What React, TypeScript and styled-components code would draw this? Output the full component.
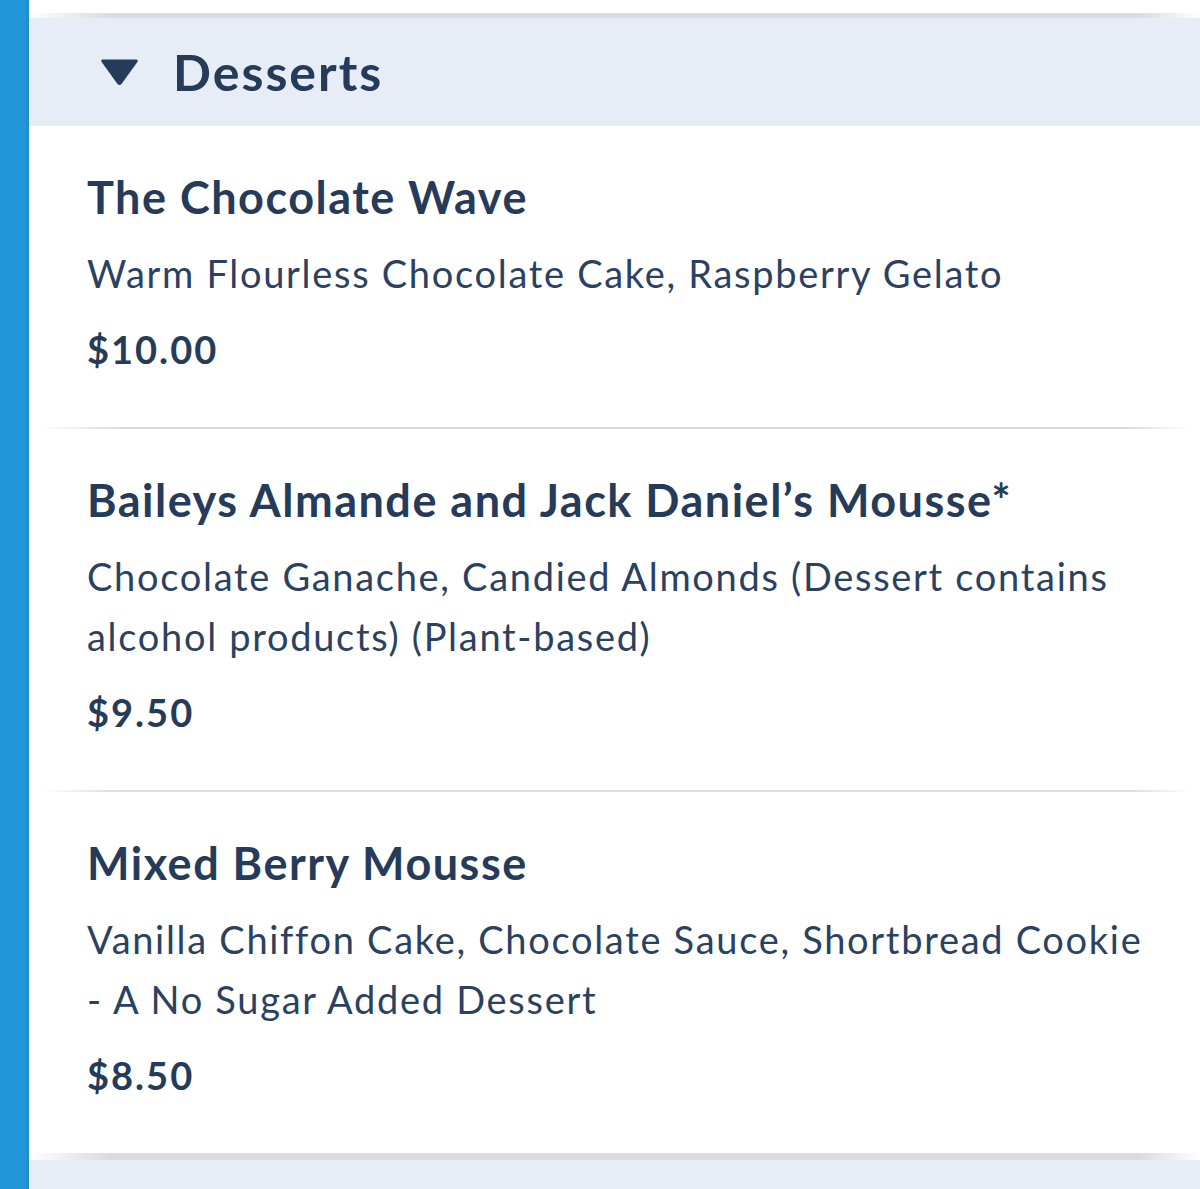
import React from "react";
import styled, { createGlobalStyle } from "styled-components";

const Global = createGlobalStyle`
  html, body { margin: 0; padding: 0; background: #ffffff; }
  body { font-family: Lato, "Noto Sans", sans-serif; color: #253b59; -webkit-font-smoothing: antialiased; }
`;

const Page = styled.div`
  display: flex;
  min-height: 1189px;
  overflow: hidden;
`;

const Sidebar = styled.div`
  width: 29px;
  flex: none;
  background: linear-gradient(to right, #2196d8 0, #2196d8 25px, #1e89c6 29px);
`;

const Main = styled.div`
  flex: 1;
  display: flex;
  flex-direction: column;
  padding-top: 13px;
`;

const Rule = styled.div<{ $thick?: number }>`
  height: ${(p) => p.$thick ?? 2}px;
  margin: 0 ${(p) => (p.$thick ? 0 : 10)}px 0 ${(p) => (p.$thick ? 0 : 11)}px;
  background: linear-gradient(
    to right,
    rgba(220, 220, 222, 0) 0,
    #dcdcde 80px,
    #dcdcde calc(100% - 60px),
    rgba(220, 220, 222, 0) 100%
  );
`;

const Header = styled.div`
  height: 108px;
  background: #e6edf7;
  display: flex;
  align-items: center;
  padding-left: 71px;
  gap: 34px;
`;

const Caret = styled.svg`
  width: 39px;
  height: 28px;
  flex: none;
`;

const HeaderTitle = styled.h2`
  margin: 0;
  font-size: 50px;
  font-weight: 700;
  letter-spacing: 2px;
  line-height: 60px;
  color: #253b59;
`;

const Item = styled.div`
  padding: 41px 40px 48px 58px;
  display: flex;
  flex-direction: column;
  gap: 16px;
`;

const Title = styled.div`
  font-size: 45px;
  font-weight: 700;
  line-height: 60px;
  letter-spacing: 1.5px;
`;

const Desc = styled.div`
  font-size: 38px;
  font-weight: 400;
  line-height: 60px;
  letter-spacing: 1.7px;
  color: #2b4160;
`;

const Price = styled.div`
  font-size: 38px;
  font-weight: 700;
  line-height: 60px;
  letter-spacing: 2px;
`;

const Footer = styled.div`
  flex: 1;
  background: #e6edf7;
`;

const items = [
  {
    title: "The Chocolate Wave",
    desc: "Warm Flourless Chocolate Cake, Raspberry Gelato",
    price: "$10.00",
  },
  {
    title: "Baileys Almande and Jack Daniel\u2019s Mousse*",
    desc: "Chocolate Ganache, Candied Almonds (Dessert contains alcohol products) (Plant-based)",
    price: "$9.50",
  },
  {
    title: "Mixed Berry Mousse",
    desc: "Vanilla Chiffon Cake, Chocolate Sauce, Shortbread Cookie - A No Sugar Added Dessert",
    price: "$8.50",
  },
];

export default function App() {
  return (
    <>
      <Global />
      <Page>
        <Sidebar />
        <Main>
          <Rule $thick={5} />
          <Header>
            <Caret viewBox="0 0 39 28">
              <path d="M3 1.5 H36 Q39 1.5 37 4.5 L21.5 26 Q19.5 28 17.5 26 L2 4.5 Q0 1.5 3 1.5 Z" fill="#253b59" />
            </Caret>
            <HeaderTitle>Desserts</HeaderTitle>
          </Header>
          {items.map((it, i) => (
            <React.Fragment key={it.title}>
              {i > 0 && <Rule />}
              <Item>
                <Title>{it.title}</Title>
                <Desc>{it.desc}</Desc>
                <Price>{it.price}</Price>
              </Item>
            </React.Fragment>
          ))}
          <Rule $thick={7} />
          <Footer />
        </Main>
      </Page>
    </>
  );
}
